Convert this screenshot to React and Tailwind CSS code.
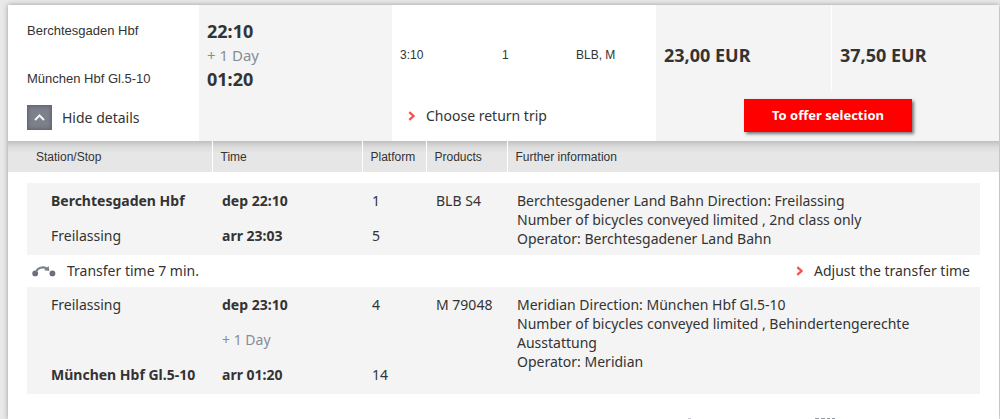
import clsx from "clsx";

const legs = [
  {
    stops: [
      { station: "Berchtesgaden Hbf", time: "dep 22:10", platform: "1", main: true },
      { station: "Freilassing", time: "arr 23:03", platform: "5" },
    ],
    product: "BLB S4",
    info: [
      "Berchtesgadener Land Bahn Direction: Freilassing",
      "Number of bicycles conveyed limited , 2nd class only",
      "Operator: Berchtesgadener Land Bahn",
    ],
  },
  {
    stops: [
      { station: "Freilassing", time: "dep 23:10", platform: "4" },
      { nextDay: "+ 1 Day" },
      { station: "München Hbf Gl.5-10", time: "arr 01:20", platform: "14", main: true },
    ],
    product: "M 79048",
    info: [
      "Meridian Direction: München Hbf Gl.5-10",
      "Number of bicycles conveyed limited , Behindertengerechte Ausstattung",
      "Operator: Meridian",
    ],
  },
];

function RedArrow() {
  return (
    <svg width="8" height="10" viewBox="0 0 8 10" fill="none" aria-hidden="true">
      <path d="M1.3 1.2 L5.5 5 L1.3 8.8" stroke="#f9504c" strokeWidth="2.3" />
    </svg>
  );
}

function TransferIcon() {
  return (
    <svg width="24" height="12" viewBox="0 0 24 12" aria-hidden="true">
      <circle cx="3.2" cy="8.4" r="2.9" fill="#6a6f7b" />
      <circle cx="20.4" cy="8.4" r="2.9" fill="#6a6f7b" />
      <path d="M4 7 C5.5 2.4 11 1.2 15 3.6" fill="none" stroke="#7b808b" strokeWidth="2.1" />
      <path d="M16.6 1 L17.4 6 L12 5.2 Z" fill="#7b808b" />
    </svg>
  );
}

function Summary() {
  return (
    <section className="grid grid-cols-[191px_193px_1fr_343px]">
      <div className="pl-[19px] pt-3.5 pb-[11px]">
        <div className="text-[13px] leading-6">
          <p>Berchtesgaden Hbf</p>
          <p className="mt-6">München Hbf Gl.5-10</p>
        </div>
        <button className="mt-3.5 flex items-center gap-2.5 font-['Noto_Sans',sans-serif] text-sm">
          <span className="flex h-[25px] w-[25px] items-center justify-center border border-[#666a75] bg-[#7d818c] shadow-[inset_0_0_4px_#5c606b]">
            <svg width="13" height="9" viewBox="0 0 13 9" fill="none" aria-hidden="true">
              <path d="M2 7 L6.5 2.5 L11 7" stroke="#f4f4f4" strokeWidth="2" />
            </svg>
          </span>
          Hide details
        </button>
      </div>

      <div className="bg-[#f4f4f4] pl-2 pt-3.5 font-['Noto_Sans',sans-serif] text-lg leading-6">
        <p className="font-bold">22:10</p>
        <p className="text-[15px] leading-6 text-[#878c96]">+ 1 Day</p>
        <p className="font-bold">01:20</p>
      </div>

      <div className="flex flex-col pl-2 pt-[38px]">
        <div className="grid grid-cols-[102px_74px_1fr] text-xs leading-6">
          <span>3:10</span>
          <span>1</span>
          <span>BLB, M</span>
        </div>
        <a href="#return" className="mt-[37px] flex items-center gap-2.5 pl-2 font-['Noto_Sans',sans-serif] text-sm leading-6">
          <RedArrow />
          Choose return trip
        </a>
      </div>

      <div className="bg-[#f4f4f4]">
        <div className="grid grid-cols-[176px_1fr] font-['Noto_Sans',sans-serif] text-lg font-bold leading-6">
          <p className="border-r border-white pb-6 pl-2 pt-[38px]">23,00 EUR</p>
          <p className="pb-6 pl-2 pt-[38px]">37,50 EUR</p>
        </div>
        <div className="flex justify-end pr-[87px] pt-2">
          <button className="h-[33px] w-[168px] bg-[#ff0000] font-['Noto_Sans',sans-serif] text-[13px] font-bold text-white shadow-[2px_2px_3px_#777]">
            To offer selection
          </button>
        </div>
      </div>
    </section>
  );
}

function Leg({ leg }) {
  return (
    <tbody className="align-top leading-[19px]">
      {leg.stops.map((stop, i) => {
        const last = i === leg.stops.length - 1;
        const cell = clsx("bg-[#f4f4f4] pt-2", last ? "pb-2.5" : "pb-2");
        return (
          <tr key={i}>
            <td />
            <td className={clsx(cell, "pl-6", stop.main && "font-bold")}>{stop.station}</td>
            <td className={clsx(cell, "pl-2.5", stop.nextDay ? "text-[#878c96]" : "font-bold")}>
              {stop.nextDay || stop.time}
            </td>
            <td className={clsx(cell, "pl-2.5")}>{stop.platform}</td>
            {i === 0 && (
              <>
                <td rowSpan={leg.stops.length} className="bg-[#f4f4f4] pl-2.5 pt-2">
                  {leg.product}
                </td>
                <td rowSpan={leg.stops.length} className="bg-[#f4f4f4] pl-2.5 pr-10 pt-2">
                  {leg.info.map((line) => (
                    <p key={line}>{line}</p>
                  ))}
                </td>
              </>
            )}
            <td />
          </tr>
        );
      })}
    </tbody>
  );
}

function Details() {
  return (
    <table className="w-full table-fixed font-['Noto_Sans',sans-serif] text-sm">
      <colgroup>
        <col className="w-[19px]" />
        <col className="w-[185px]" />
        <col className="w-[150px]" />
        <col className="w-[64px]" />
        <col className="w-[81px]" />
        <col />
        <col className="w-[19px]" />
      </colgroup>
      <thead className="bg-linear-to-b from-[#bfc1c0] via-[#dcdcdc] via-20% to-[#e6e6e6] to-40% text-left font-['Liberation_Sans',sans-serif] text-xs">
        <tr className="h-[31px]">
          <th colSpan={2} className="pl-7 font-normal">Station/Stop</th>
          <th className="border-l border-white pl-2 font-normal">Time</th>
          <th className="border-l border-white pl-2 font-normal">Platform</th>
          <th className="border-l border-white pl-2 font-normal">Products</th>
          <th colSpan={2} className="border-l border-white pl-2 font-normal">Further information</th>
        </tr>
      </thead>
      <tbody aria-hidden="true">
        <tr className="h-[11px]">
          <td colSpan={7} />
        </tr>
      </tbody>
      <Leg leg={legs[0]} />
      <tbody>
        <tr className="h-8">
          <td />
          <td colSpan={5}>
            <div className="flex items-center justify-between pl-[5px] pr-2.5">
              <span className="flex items-center gap-[11px]">
                <TransferIcon />
                Transfer time 7 min.
              </span>
              <a href="#transfer" className="flex items-center gap-2.5">
                <RedArrow />
                Adjust the transfer time
              </a>
            </div>
          </td>
          <td />
        </tr>
      </tbody>
      <Leg leg={legs[1]} />
    </table>
  );
}

export default function App() {
  return (
    <div className="min-h-screen overflow-hidden bg-[#e9e9e9] pl-2 pr-px pt-[5px] font-['Liberation_Sans',sans-serif] text-[#333]">
      <main className="min-h-[calc(100vh-5px)] bg-white shadow-[0_0_5px_#999]">
        <Summary />
        <Details />
        {/* upper edge of the action icons */}
        <div className="flex justify-end pr-[164px] pt-6">
          <svg width="148" height="1" viewBox="0 0 148 1" aria-hidden="true">
            <path d="M1 0h3v1h-3z" fill="#c5c7cb" />
            <path d="M128 0h4v1h-4zM134 0h4v1h-4zM140 0h3v1h-3zM145 0h3v1h-3z" fill="#9699a2" />
          </svg>
        </div>
      </main>
    </div>
  );
}
